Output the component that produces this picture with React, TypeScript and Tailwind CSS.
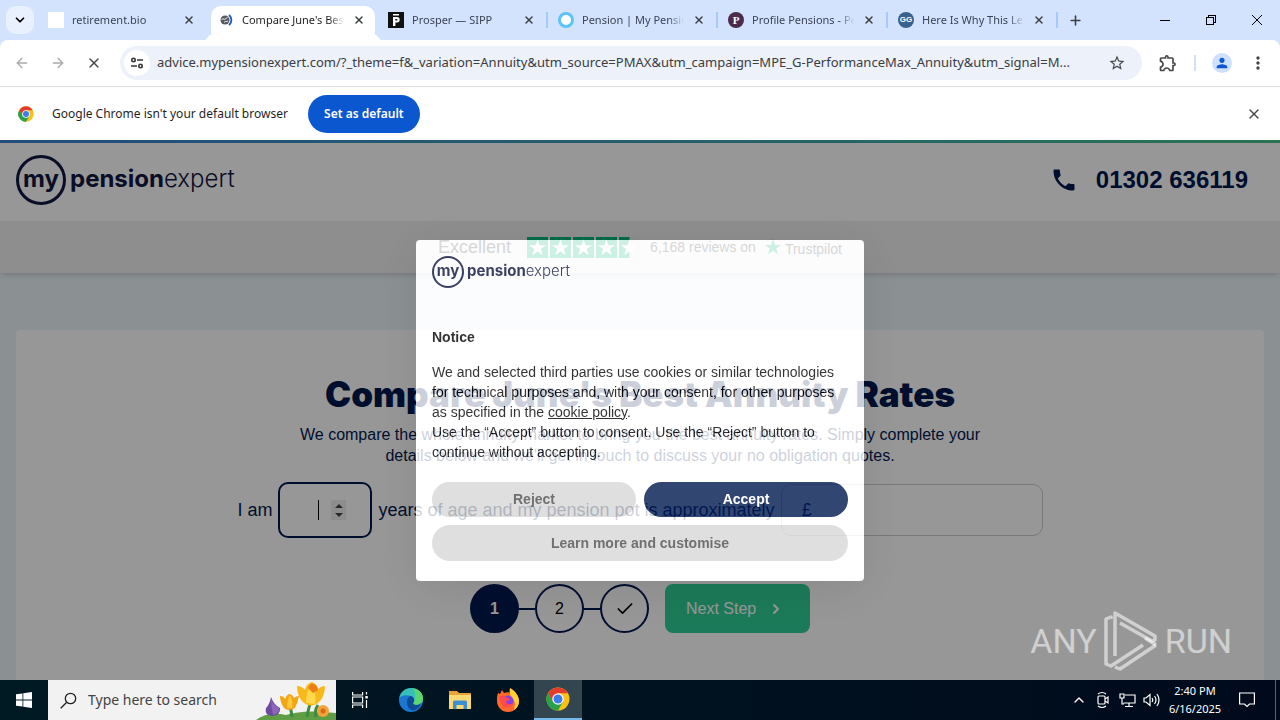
import React from 'react'
import { clsx } from 'clsx'
import { ArrowLeft, ArrowRight, Check, ChevronDown, ChevronRight, ChevronUp, Plus, X } from 'lucide-react'
import { MdPerson, MdPhone, MdOutlineExtension, MdStarOutline, MdMoreVert } from 'react-icons/md'

const ChromeLogo: React.FC<{ className?: string }> = ({ className }) => (
  <svg viewBox="0 0 48 48" className={className} aria-hidden="true">
    <circle cx="24" cy="24" r="23" fill="#fbc116" />
    <path d="M24 24 4.1 12.5A23 23 0 0 1 43.9 12.5H24Z" fill="#e33b2e" />
    <path d="M4.1 12.5A23 23 0 0 0 24 47l10-17.3L24 24 14 29.8Z" fill="#2aa14b" />
    <path d="M4.1 12.5 14 29.8 24 24V12.5Z" fill="#e33b2e" />
    <path d="M4.1 12.5 14.2 30a11.5 11.5 0 0 0 10 5.5L18 46.3A23 23 0 0 1 4.1 12.5Z" fill="#2aa14b" />
    <circle cx="24" cy="24" r="11.5" fill="#fff" />
    <circle cx="24" cy="24" r="9" fill="#3b7ded" />
  </svg>
)

interface TabInfo {
  title: string
  icon: React.ReactNode
  active?: boolean
  divider?: boolean
}

const tabs: TabInfo[] = [
  { title: 'retirement.bio', icon: <span className="size-4 bg-white" /> },
  {
    title: "Compare June's Best",
    active: true,
    icon: (
      <svg viewBox="0 0 16 16" className="size-4" fill="none">
        <circle cx="7" cy="8" r="4.5" fill="#55595e" />
        <path d="M3.500 7.500c2-1.500 3 .5 4-.5s1-1.500 2-1.500M6 10.500c1-1.500 2-.5 4-1.500" stroke="#fff" strokeWidth="1" />
        <path d="M11.500 3.500c2.500 2.500 2.500 6.500 0 9" stroke="#1a56c4" strokeWidth="1.800" strokeLinecap="round" />
      </svg>
    ),
  },
  {
    title: 'Prosper — SIPP',
    divider: true,
    icon: (
      <svg viewBox="0 0 16 16" className="size-4">
        <rect width="16" height="16" fill="#111" />
        <path d="M5 2h6v1.4H5zM5 5h4a2.4 2.4 0 0 1 0 5.4H7.4V14H5zM7.3 7v1.6h1.4a.8.8 0 0 0 0-1.6z" fill="#fff" />
      </svg>
    ),
  },
  {
    title: 'Pension | My Pension',
    divider: true,
    icon: <span className="size-4 rounded-full border-3 border-[#5bc5f9] bg-white" />,
  },
  {
    title: 'Profile Pensions - Pe',
    divider: true,
    icon: (
      <span className="flex size-4 items-center justify-center rounded-full bg-[#4c2a4e] font-['Liberation_Serif',serif] text-[11px] leading-none font-bold text-white">
        P
      </span>
    ),
  },
  {
    title: 'Here Is Why This Le',
    divider: true,
    icon: (
      <span className="flex size-4 items-center justify-center rounded-full bg-[#39618f] font-['Liberation_Sans',sans-serif] text-[8px] leading-none font-bold text-white">
        GG
      </span>
    ),
  },
]

const Tab: React.FC<{ tab: TabInfo }> = ({ tab }) => (
  <div className="relative flex h-full w-[170px] shrink-0 items-center px-[3px] pt-[6px]">
    <div
      className={clsx(
        'relative flex h-full w-full items-center gap-2 pl-[7px]',
        tab.active && 'rounded-t-[10px] bg-white'
      )}
    >
      {tab.active && (
        <>
          <span className="absolute bottom-0 -left-[10px] size-[10px] rounded-br-[10px] shadow-[5px_5px_0_white]" />
          <span className="absolute -right-[10px] bottom-0 size-[10px] rounded-bl-[10px] shadow-[-5px_5px_0_white]" />
        </>
      )}
      <span className="flex shrink-0 pb-[6px]">{tab.icon}</span>
      <span
        className={clsx(
          'w-[102px] overflow-hidden pb-[6px] text-[11px] whitespace-nowrap mask-r-from-85%',
          tab.active ? 'text-[#1f1f1f]' : 'text-[#3c4454]'
        )}
      >
        {tab.title}
      </span>
      <button aria-label={`Close ${tab.title}`} className="mr-[10px] ml-auto pb-[6px] text-[#3c4043]">
        <X className="size-3" strokeWidth={3} />
      </button>
    </div>
    {tab.divider && <span className="absolute top-3 right-0 h-4 w-[2px] bg-[#a8c7fa]" />}
  </div>
)

const TabStrip: React.FC = () => (
  <div className="flex h-10 items-center bg-[#d3e3fd]">
    <button aria-label="Search tabs" className="mr-1 ml-[6px] flex size-7 shrink-0 items-center justify-center rounded-[10px] bg-[#eaf1fe]">
      <ChevronDown className="size-[14px]" strokeWidth={3} />
    </button>
    {tabs.map((tab) => (
      <Tab key={tab.title} tab={tab} />
    ))}
    <button aria-label="New tab" className="ml-[10px] text-[#3c4043]">
      <Plus className="size-[15px]" strokeWidth={2.5} />
    </button>
    <div className="ml-auto flex h-full">
      <button aria-label="Minimize" className="flex w-[46px] items-center justify-center">
        <svg viewBox="0 0 10 10" className="size-[10px]" shapeRendering="crispEdges">
          <path d="M0 5.5h10" stroke="#000" />
        </svg>
      </button>
      <button aria-label="Restore" className="flex w-[46px] items-center justify-center">
        <svg viewBox="0 0 10 10" className="size-[10px]" fill="none" stroke="#000" shapeRendering="crispEdges">
          <path d="M.5 2.5h7v7h-7zM2.5 2V.5h7v7H8" />
        </svg>
      </button>
      <button aria-label="Close window" className="flex w-[46px] items-center justify-center">
        <svg viewBox="0 0 10 10" className="size-[10px]" stroke="#000">
          <path d="m0 0 10 10M10 0 0 10" />
        </svg>
      </button>
    </div>
  </div>
)

const Toolbar: React.FC = () => (
  <div className="bg-[#d3e3fd]">
    <div className="flex h-[47px] items-center rounded-t-lg border-b border-[#dfe1e6] bg-white pr-3 pl-[14px]">
      <button aria-label="Back" className="text-[#a9abae]">
        <ArrowLeft className="size-4" />
      </button>
      <button aria-label="Forward" className="ml-5 text-[#a9abae]">
        <ArrowRight className="size-4" />
      </button>
      <button aria-label="Stop" className="ml-5 text-[#474747]">
        <X className="size-4" />
      </button>
      <div className="ml-[18px] flex h-[34px] min-w-0 flex-1 items-center rounded-full bg-[#edf1fa] pr-4 pl-1">
        <button aria-label="Site information" className="flex size-[26px] shrink-0 items-center justify-center rounded-full bg-white">
          <svg viewBox="0 0 14 14" className="size-[14px]" fill="none" stroke="#333" strokeWidth="1.6">
            <circle cx="3.5" cy="4" r="1.7" />
            <path d="M7 4h6M1 10h6" />
            <circle cx="10.5" cy="10" r="1.7" />
          </svg>
        </button>
        <input
          aria-label="Address"
          readOnly
          defaultValue="advice.mypensionexpert.com/?_theme=f&_variation=Annuity&utm_source=PMAX&utm_campaign=MPE_G-PerformanceMax_Annuity&utm_signal=M..."
          className="ml-[7px] min-w-0 flex-1 bg-transparent text-[13px] text-[#3a3d42] outline-none"
        />
        <button aria-label="Bookmark" className="text-[#474747]">
          <MdStarOutline className="size-[18px]" />
        </button>
      </div>
      <button aria-label="Extensions" className="ml-4 text-[#474747]">
        <MdOutlineExtension className="size-5" />
      </button>
      <span className="ml-4 h-4 w-[2px] bg-[#d5e0f5]" />
      <button aria-label="Profile" className="ml-4 flex size-5 items-center justify-center rounded-full bg-[#cfe0fc] text-[#0b57d0]">
        <MdPerson className="size-4" />
      </button>
      <button aria-label="Menu" className="ml-4 text-[#474747]">
        <MdMoreVert className="size-5" />
      </button>
    </div>
  </div>
)

const InfoBar: React.FC = () => (
  <div className="flex h-[53px] items-center bg-white px-[18px]">
    <ChromeLogo className="size-4" />
    <span className="ml-[18px] text-xs text-[#1f1f1f]">Google Chrome isn't your default browser</span>
    <button className="ml-5 h-[38px] w-28 rounded-full bg-[#0b57d0] text-xs font-semibold text-white">Set as default</button>
    <button aria-label="Dismiss" className="ml-auto text-[#474747]">
      <X className="size-4" />
    </button>
  </div>
)

const BrandLogo: React.FC<{ small?: boolean }> = ({ small }) => (
  <div className={clsx("flex items-center font-['Inter',sans-serif] text-[#10163f]", small ? 'gap-[3px]' : 'gap-1')}>
    <span
      className={clsx(
        'flex items-center justify-center rounded-full font-bold',
        small ? 'size-8 border-2 pb-[2px] text-[15px]' : 'size-[50px] border-3 pb-[3px] text-2xl'
      )}
    >
      my
    </span>
    <span className={clsx('leading-none font-light', small ? 'pb-[2px] text-[15px]' : 'pb-[3px] text-2xl leading-none')}>
      <b className="font-bold">pension</b>expert
    </span>
  </div>
)

const STAR = 'M12 2.5l2.4 7h7.3l-5.9 4.3 2.2 7L12 16.500l-6 4.300 2.200-7L2.300 9.500h7.300z'

const TrustBar: React.FC = () => (
  <div className="flex h-[52px] shrink-0 items-center justify-center bg-[#f0f0f0] text-[#333] shadow-md">
    <span className="text-lg">Excellent</span>
    <div className="ml-4 flex gap-[2px]">
      {[1, 2, 3, 4, 5].map((n) => (
        <svg key={n} viewBox="0 0 24 24" className="size-[21px]">
          <rect width="24" height="24" fill={n === 5 ? '#eeeef2' : '#00b67a'} />
          {n === 5 && <rect width="12" height="24" fill="#00b67a" />}
          <path d={STAR} fill="#fff" />
        </svg>
      ))}
    </div>
    <span className="ml-[10px] text-sm">6,168 reviews on</span>
    <svg viewBox="0 0 24 24" className="ml-[7px] size-5">
      <path d={STAR} fill="#00b67a" />
    </svg>
    <span className="ml-[2px] pt-1 text-sm">Trustpilot</span>
  </div>
)

const QuoteCard: React.FC = () => (
  <section className="mx-4 mt-[57px] h-[420px] shrink-0 rounded bg-white pt-11 text-center text-[#00184f]">
    <h1 className="font-['Inter',sans-serif] text-[35px] leading-10 font-black">Compare June's Best Annuity Rates</h1>
    <p className="mx-auto mt-[10px] max-w-[700px] text-base leading-[21px]">
      We compare the whole annuity market to bring you the best annuity rates. Simply complete your details below and we'll get in touch to
      discuss your no obligation quotes.
    </p>
    <form className="mt-4 flex items-center justify-center text-lg" onSubmit={(e) => e.preventDefault()}>
      <label htmlFor="age">I am</label>
      <div className="relative mx-[6px] flex h-14 w-[94px] items-center rounded-[10px] border-2 border-[#00184f]">
        <input id="age" inputMode="numeric" className="h-full w-full bg-transparent pl-10 outline-none" />
        <span className="absolute left-[38px] h-5 w-px bg-black" />
        <span className="absolute right-6 flex h-5 w-[15px] flex-col items-center justify-center gap-[5px] bg-[#efefef]">
          <svg viewBox="0 0 8 4" className="h-1 w-2">
            <path d="M0 4 4 0l4 4z" fill="#444" />
          </svg>
          <svg viewBox="0 0 8 4" className="h-1 w-2">
            <path d="M0 0h8L4 4z" fill="#444" />
          </svg>
        </span>
      </div>
      <label htmlFor="pot">years of age and my pension pot is approximately</label>
      <div className="ml-[6px] flex h-[52px] w-[262px] items-center rounded-[10px] border border-[#ccc] pl-[20px]">
        <span>£</span>
        <input id="pot" inputMode="numeric" className="h-full min-w-0 flex-1 bg-transparent pl-2 outline-none" />
      </div>
    </form>
    <div className="mt-[46px] flex items-center justify-center text-base">
      <span className="flex size-[49px] items-center justify-center rounded-full bg-[#00184f] font-bold text-white">1</span>
      <span className="h-[2px] w-4 bg-[#00184f]" />
      <span className="flex size-[49px] items-center justify-center rounded-full border-2 border-[#00184f] text-black">2</span>
      <span className="h-[2px] w-4 bg-[#00184f]" />
      <span className="flex size-[49px] items-center justify-center rounded-full border-2 border-[#00184f] text-black">
        <Check className="size-5" />
      </span>
      <button className="ml-4 flex h-[49px] w-[145px] items-center gap-3 rounded-lg bg-[#2fcf96] pl-[21px] text-white">
        Next Step
        <ChevronRight className="size-4" strokeWidth={3} />
      </button>
    </div>
  </section>
)

// The dimmed backdrop is a spread shadow, so the page shows undimmed through the fading dialog.
const CookieDialog: React.FC = () => (
  <div className="absolute inset-0 flex items-center justify-center">
    <div
      role="dialog"
      aria-label="Notice"
      className="flex w-[448px] flex-col rounded bg-white p-4 pb-5 text-sm text-black opacity-80 shadow-[0_8px_48px_rgba(0,0,0,0.15),0_0_0_2000px_rgba(0,0,0,0.51)]"
    >
      <BrandLogo small />
      <p className="mt-[39px] leading-5 font-bold">Notice</p>
      <p className="mt-[15px] leading-5">
        We and selected third parties use cookies or similar technologies for technical purposes and, with your consent, for other purposes
        as specified in the{' '}
        <a href="#cookie-policy" className="underline">
          cookie policy
        </a>
        .
        <br />
        Use the “Accept” button to consent. Use the “Reject” button to continue without accepting.
      </p>
      <div className="mt-5 grid grid-cols-2 gap-2 font-bold">
        <button className="h-[35px] rounded-full bg-[#d8d8d8] text-[#4d4d4d]">Reject</button>
        <button className="h-[35px] rounded-full bg-[#00184f] text-white">Accept</button>
        <button className="col-span-2 h-9 rounded-full bg-[#d8d8d8] text-[#4d4d4d]">Learn more and customise</button>
      </div>
    </div>
  </div>
)

const Watermark: React.FC = () => (
  <div className="pointer-events-none absolute right-12 bottom-2 flex items-center gap-[6px] font-['Roboto',sans-serif] text-[34px] leading-none text-white/55">
    <span>ANY</span>
    <svg viewBox="0 0 56 62" className="h-[62px] w-14" fill="none" stroke="currentColor" strokeWidth="3.500" strokeLinejoin="round">
      <path d="M8 9V7L3 9v45l5 2 32-21" />
      <path d="M12 46V3l40 23v4l-3 1L17 13" />
      <path d="M53 35 17 59l-5-2" />
      <path d="M53 35 42 28" />
    </svg>
    <span>RUN</span>
  </div>
)

const Flowers: React.FC = () => (
  <svg viewBox="0 0 80 39" className="h-[39px] w-20">
    <path d="M0 39q12-9 30-5 18-6 50-2v7z" fill="#5f9e45" />
    <path d="M36 36q-1-8-2-10M51 36q2-12 4-14M60 36q-2-6 2-12" stroke="#3d8b3c" strokeWidth="3" fill="none" />
    <path d="M15 16q-1 7-5 11-2 7 6 8 9-1 8-8-6-3-9-11z" fill="#6d4a9c" />
    <path d="M15 18q0 8 2 16 7-2 6-7-6-3-8-9z" fill="#8c66b8" />
    <path d="M24 15q4 0 5 3 2-5 5-5 3 1 4 4 2-2 5-2-1 6-4 12-6 4-11 0-4-6-4-12z" fill="#f3a615" />
    <path d="M31 27q0-8 3-13 3 5 2 13z" fill="#fbcb3b" />
    <path d="M41 5q5 0 8 4 1-6 7-8 5 2 6 7 3-3 7-3 0 11-7 17-7 5-14 0-7-6-7-17z" fill="#f8b91b" />
    <path d="M50 22q0-11 5-19 6 9 4 20z" fill="#ffd84c" />
    <path d="M52 7q3-6 5-4 4 0 5 6l-5 3z" fill="#ef7d16" />
    <circle cx="67" cy="30" r="6" fill="#f4a338" />
    <circle cx="67" cy="30" r="2.500" fill="#d96a1a" />
  </svg>
)

const Taskbar: React.FC = () => (
  <footer className="flex h-10 shrink-0 items-stretch bg-linear-to-r from-[#001a23] to-[#000a1c] text-white">
    <button aria-label="Start" className="flex w-12 items-center justify-center">
      <svg viewBox="0 0 16 16" className="size-4" fill="#fff">
        <path d="M0 2.300 6.500 1.400v6.200H0zM7.300 1.300 16 0v7.600H7.300zM0 8.400h6.500v6.200L0 13.700zM7.300 8.400H16V16l-8.700-1.300z" />
      </svg>
    </button>
    <div className="flex w-72 items-center bg-[#f2f2f2] pl-3 text-[#333]">
      <svg viewBox="0 0 17 17" className="size-[17px] shrink-0" fill="none" stroke="#222" strokeWidth="1.300">
        <circle cx="10.500" cy="6.500" r="5.200" />
        <path d="M6.700 10.300.7 16.300" />
      </svg>
      <input
        aria-label="Search"
        placeholder="Type here to search"
        className="ml-[11px] min-w-0 flex-1 bg-transparent text-sm outline-none placeholder:text-[#444]"
      />
      <Flowers />
    </div>
    <button aria-label="Task view" className="flex w-12 items-center justify-center">
      <svg viewBox="0 0 16 16" className="size-4" fill="none" stroke="#fff" strokeWidth="1.200">
        <path d="M.6 0v3h10V0M.6 16v-3h10v3M.6 5h10v6H.6zM14.500 0v2.500M14.500 8v8" />
        <path d="M13.300 4h2.500v2.500h-2.500z" fill="#fff" stroke="none" />
      </svg>
    </button>
    <button aria-label="Edge" className="flex w-[54px] items-center justify-center">
      <svg viewBox="0 0 24 24" className="size-6">
        <circle cx="12" cy="12" r="12" fill="#1b78d0" />
        <path d="M.3 10C1.500 4 6.500 0 12 0c7 0 12 5 12 10.500 0 4-3 6.500-6.500 6.500-3 0-4-1-3-2.500 1.500-2 .5-5.500-3-6.500C7 6.500 2.500 7.500.3 10z" fill="#35c1b5" />
        <path d="M14 .2C20 1 24 5.500 24 10.500c0 4-3 6.500-6.500 6.500-3 0-4-1-3-2.500 2-2.500 3-9-.5-14.300z" fill="#5cd671" />
        <path d="M8 14c0-3 1.500-5.500 4-6 3 1 4 4.500 2.500 6.500-1 1.500 0 2.500 3 2.500 2 0 3.500-.8 4.500-2-1 5-6 8-9.500 7C9.500 21 8 17.500 8 14z" fill="#0f4a94" />
      </svg>
    </button>
    <button aria-label="File Explorer" className="flex w-[44px] items-center justify-center">
      <svg viewBox="0 0 22 20" className="h-5 w-[22px]">
        <path d="M0 1h8l2 2h12v16H0z" fill="#e8a33a" />
        <path d="M0 5h22v14H0z" fill="#fbd975" />
        <path d="M4 12q0-1.500 1.500-1.500h11Q18 10.500 18 12v7h-3.500v-4h-7v4H4z" fill="#3e8fd0" />
      </svg>
    </button>
    <button aria-label="Firefox" className="flex w-[52px] items-center justify-center">
      <svg viewBox="0 0 24 24" className="size-6">
        <path d="M2 5l2 1 2-4 2 3c3-1 5-1 7 0l-1-5c5 3 9 8 9 13a11 11 0 0 1-22 0c0-3 0-5 1-8z" fill="#ff6a2b" />
        <path d="M14 0c5 3 9 8 9 13 0 4-2 7-5 9 1-5 2-8-2-12-2-3-3-6-2-10z" fill="#ffcf33" />
        <circle cx="12" cy="13" r="5.500" fill="#8a3fe0" />
        <path d="M4 8c3 0 5 0 7 2l3 1c-1 2-3 1-4 3 1 3 6 3 8 0-1 6-8 7-11 4-2-2-4-6-3-10z" fill="#ff4a50" />
      </svg>
    </button>
    <button aria-label="Chrome" className="flex w-12 items-center justify-center border-b-2 border-[#76b9ed] bg-[#33454e]">
      <ChromeLogo className="size-6" />
    </button>
    <div className="ml-auto flex items-center">
      <ChevronUp className="size-4" strokeWidth={2} />
      <svg viewBox="0 0 16 18" className="ml-2 h-[18px] w-4" fill="none" stroke="#fff" strokeWidth="1.200">
        <rect x="3" y="5" width="7" height="8" rx="1" />
        <path d="m10 8 3-2v6l-3-2M3 3q4-3 8 0M3 15q4 3 8 0" />
      </svg>
      <svg viewBox="0 0 17 16" className="ml-2 h-4 w-[17px]" fill="none" stroke="#fff" strokeWidth="1.200">
        <path d="M6 3h10v8H4.500M10 11v3M6 14.500h8M1 2h4v4H1zM3 6v6h2" />
      </svg>
      <svg viewBox="0 0 17 16" className="ml-[7px] h-4 w-[17px]" fill="none" stroke="#fff" strokeWidth="1.200">
        <path d="M1 6h2l4-3.500v11L3 10H1zM9 6q1.500 2 0 4M11.500 4q3 4 0 8M14 2q4 6 0 12" />
      </svg>
      <div className="w-[70px] text-center text-[11px] leading-[18px]">
        <div>2:40 PM</div>
        <div>6/16/2025</div>
      </div>
      <svg viewBox="0 0 16 16" className="mr-5 ml-[9px] size-4" fill="none" stroke="#fff" strokeWidth="1.200">
        <path d="M.6 1h14.800v11H10.500L8 14.500 5.500 12H.6z" />
      </svg>
      <span className="mr-1 h-10 w-px bg-[#5a6372]" />
    </div>
  </footer>
)

export default function App() {
  return (
    <div className="flex h-screen flex-col overflow-hidden font-['Noto_Sans',sans-serif]">
      <TabStrip />
      <Toolbar />
      <InfoBar />
      <main className="relative flex min-h-0 flex-1 flex-col overflow-hidden bg-[#ebf4f8] font-['Liberation_Sans',Arial,sans-serif]">
        <div className="h-[3px] shrink-0 bg-linear-to-r from-[#3f7fd0] via-[#3fa0b8] to-[#4cc08a]" />
        <header className="flex h-[78px] shrink-0 items-center justify-between bg-white pr-8 pb-1 pl-4">
          <BrandLogo />
          <a href="tel:01302636119" className="flex items-center gap-[18px] text-2xl font-bold text-[#00184f]">
            <MdPhone className="size-7" />
            01302 636119
          </a>
        </header>
        <TrustBar />
        <QuoteCard />
        <CookieDialog />
        <Watermark />
      </main>
      <Taskbar />
    </div>
  )
}
